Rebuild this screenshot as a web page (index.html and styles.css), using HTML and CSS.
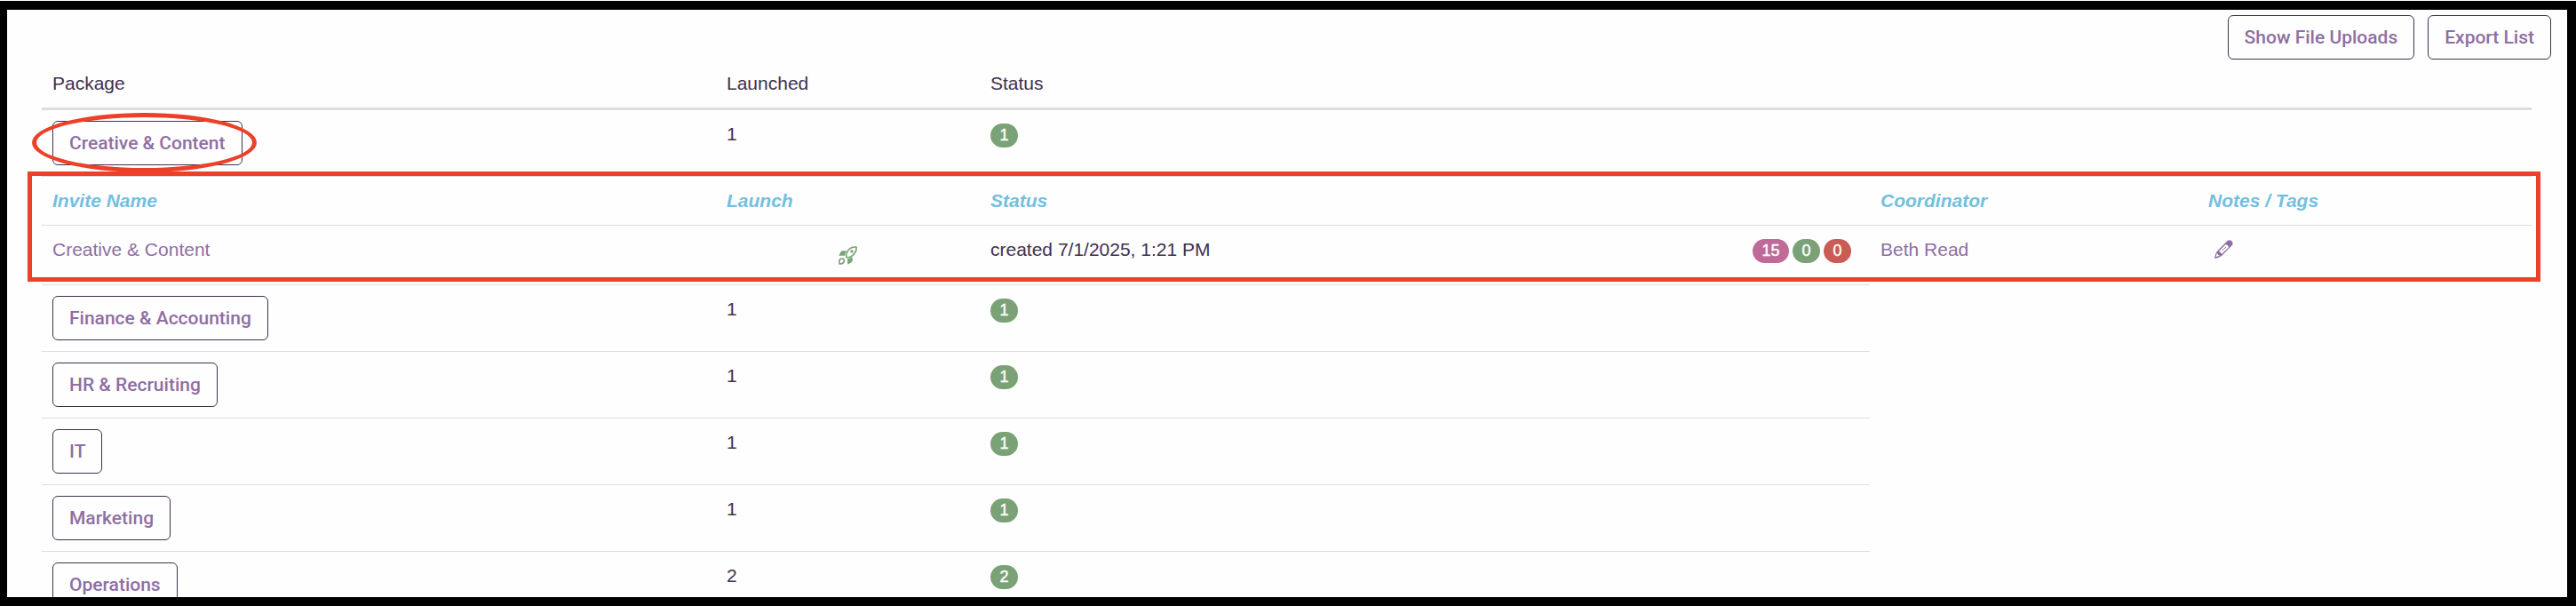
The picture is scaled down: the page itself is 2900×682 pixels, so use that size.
FILE: index.html
```
<!DOCTYPE html>
<html lang="en">
<head>
    <meta charset="UTF-8">
    <title>Packages</title>
    <link rel="stylesheet" href="styles.css">
</head>
<body>
    <div class="frame">
        <div class="toolbar">
            <button class="btn">Show File Uploads</button>
            <button class="btn">Export List</button>
        </div>

        <table class="packages">
            <colgroup>
                <col class="col-name">
                <col class="col-launch">
                <col class="col-status">
                <col class="col-coordinator">
                <col class="col-notes">
            </colgroup>
            <thead>
                <tr>
                    <th>Package</th>
                    <th>Launched</th>
                    <th>Status</th>
                    <th></th>
                    <th></th>
                </tr>
            </thead>
            <tbody>
                <tr class="package open">
                    <td><button class="btn">Creative &amp; Content</button></td>
                    <td>1</td>
                    <td><span class="badge green">1</span></td>
                    <td></td>
                    <td></td>
                </tr>
                <tr class="invite-head">
                    <th>Invite Name</th>
                    <th>Launch</th>
                    <th>Status</th>
                    <th>Coordinator</th>
                    <th>Notes / Tags</th>
                </tr>
                <tr class="invite">
                    <td><a class="link">Creative &amp; Content</a></td>
                    <td class="launch">
                        <svg class="icon rocket" viewBox="0 0 63 63">
                            <path class="fill" d="M1 32 L8 19 Q10 16 14 16 L27 16 Q22 24 22 32 Z"/>
                            <path class="fill" d="M30 43 Q40 42 47 36 V49 Q47 53 43 55 L31 62 Z"/>
                            <path class="line" d="M60 3 C46 2 36 8 30 18 C26 26 25 33 27 38 C34 39 42 36 48 31 C57 24 61 16 60 3 Z"/>
                            <circle class="fill" cx="45" cy="18" r="5"/>
                            <path class="line" d="M3 60 V50 C3 44 7 42 11 42 C17 42 20 46 19 51 C18 57 12 60 3 60 Z"/>
                        </svg>
                    </td>
                    <td>
                        <div class="status">
                            <span>created 7/1/2025, 1:21 PM</span>
                            <span class="counts">
                                <span class="badge pink">15</span>
                                <span class="badge green">0</span>
                                <span class="badge red">0</span>
                            </span>
                        </div>
                    </td>
                    <td><a class="link">Beth Read</a></td>
                    <td>
                        <svg class="icon pencil" viewBox="0 0 63 63">
                            <path class="fill" fill-rule="evenodd" d="M43 4 Q51 -2 58 4 Q65 11 59 19 L25 53 Q15 61 0 63 Q1 48 10 37 Z M38 15 L15 38 Q17 41 21 41 Q21 46 25 47 L48 25 Q46 16 38 15 Z M8 46 L5 57 L17 54 Q16 51 12 51 Q12 47 8 46 Z"/>
                            <path class="thin" d="M26 36 L39 24"/>
                        </svg>
                    </td>
                </tr>
                <tr class="package">
                    <td><button class="btn">Finance &amp; Accounting</button></td>
                    <td>1</td>
                    <td><span class="badge green">1</span></td>
                </tr>
                <tr class="package">
                    <td><button class="btn">HR &amp; Recruiting</button></td>
                    <td>1</td>
                    <td><span class="badge green">1</span></td>
                </tr>
                <tr class="package">
                    <td><button class="btn">IT</button></td>
                    <td>1</td>
                    <td><span class="badge green">1</span></td>
                </tr>
                <tr class="package">
                    <td><button class="btn">Marketing</button></td>
                    <td>1</td>
                    <td><span class="badge green">1</span></td>
                </tr>
                <tr class="package">
                    <td><button class="btn">Operations</button></td>
                    <td>2</td>
                    <td><span class="badge green">2</span></td>
                </tr>
            </tbody>
        </table>
    </div>

    <!-- red callouts over the table -->
    <div class="mark mark-oval"></div>
    <div class="mark mark-box"></div>
</body>
</html>
```
FILE: styles.css
```
* {
    box-sizing: border-box;
}
body {
    position: relative;
    margin: 0;
    padding-top: 1px;
    height: 682px;
    overflow: hidden;
    background: #fefefe;
    font-family: "Liberation Sans", Arial, sans-serif;
    font-size: 21px;
    line-height: 30px;
    color: #41304e;
}
.frame {
    height: 681px;
    border: 10px solid #000;
    border-left-width: 8px;
    padding: 6px 18px 0 39px;
    overflow: hidden;
}
.toolbar {
    display: flex;
    justify-content: flex-end;
    gap: 15px;
}
.btn {
    display: block;
    height: 50px;
    padding: 9px 18px;
    border: 1px solid #41304e;
    border-radius: 6px;
    background: transparent;
    color: #8f6fa3;
    font-family: Roboto, sans-serif;
    font-size: 21px;
    font-weight: 500;
    line-height: 30px;
    white-space: nowrap;
}
.packages {
    width: 2803px;
    table-layout: fixed;
    border-spacing: 0;
}
.col-name { width: 759px; }
.col-launch { width: 297px; }
.col-status { width: 1002px; }
.col-coordinator { width: 369px; }
.col-notes { width: 376px; }
th, td {
    padding: 12px;
    text-align: left;
    vertical-align: top;
    font-weight: normal;
}
thead th {
    height: 57px;
    border-bottom: 3px solid #ddd;
}
.package td {
    height: 75px;
    border-top: 1px solid #ddd;
}
.package.open td {
    height: 74px;
    border-top: none;
}
.invite-head th {
    height: 55px;
    border-top: 1px solid #ddd;
    color: #74bfdf;
    font-weight: bold;
    font-style: italic;
}
.invite td {
    height: 67px;
    border-top: 1px solid #ddd;
}
.link {
    color: #8f6fa3;
}
.badge {
    display: block;
    width: fit-content;
    min-width: 31px;
    height: 27px;
    margin-top: 3px;
    padding: 0 10.5px;
    border-radius: 13.5px;
    color: #fff;
    font-size: 18px;
    line-height: 27px;
    text-align: center;
    -webkit-text-stroke: 0.4px #fff;
}
.green { background: #7aa276; }
.pink { background: #bf6a98; }
.red { background: #c95c54; }
.status {
    display: flex;
    justify-content: space-between;
}
.counts {
    display: flex;
    gap: 4px;
    padding-right: 9px;
}
.launch {
    text-align: center;
}
.icon {
    display: block;
    width: 21px;
    height: 21px;
}
.rocket {
    margin: 11px auto 0;
    color: #7aa276;
}
.pencil {
    margin: 4px 0 0 7px;
    color: #8f6fa3;
}
.fill {
    fill: currentColor;
}
.line, .thin {
    fill: none;
    stroke: currentColor;
    stroke-width: 5;
    stroke-linejoin: round;
}
.thin {
    stroke-width: 3;
}
.mark {
    position: absolute;
    border: 5px solid #ec4128;
}
.mark-oval {
    left: 36px;
    top: 127px;
    width: 253px;
    height: 67px;
    border-radius: 50%;
}
.mark-box {
    left: 31px;
    top: 193px;
    width: 2829px;
    height: 124px;
}
```
